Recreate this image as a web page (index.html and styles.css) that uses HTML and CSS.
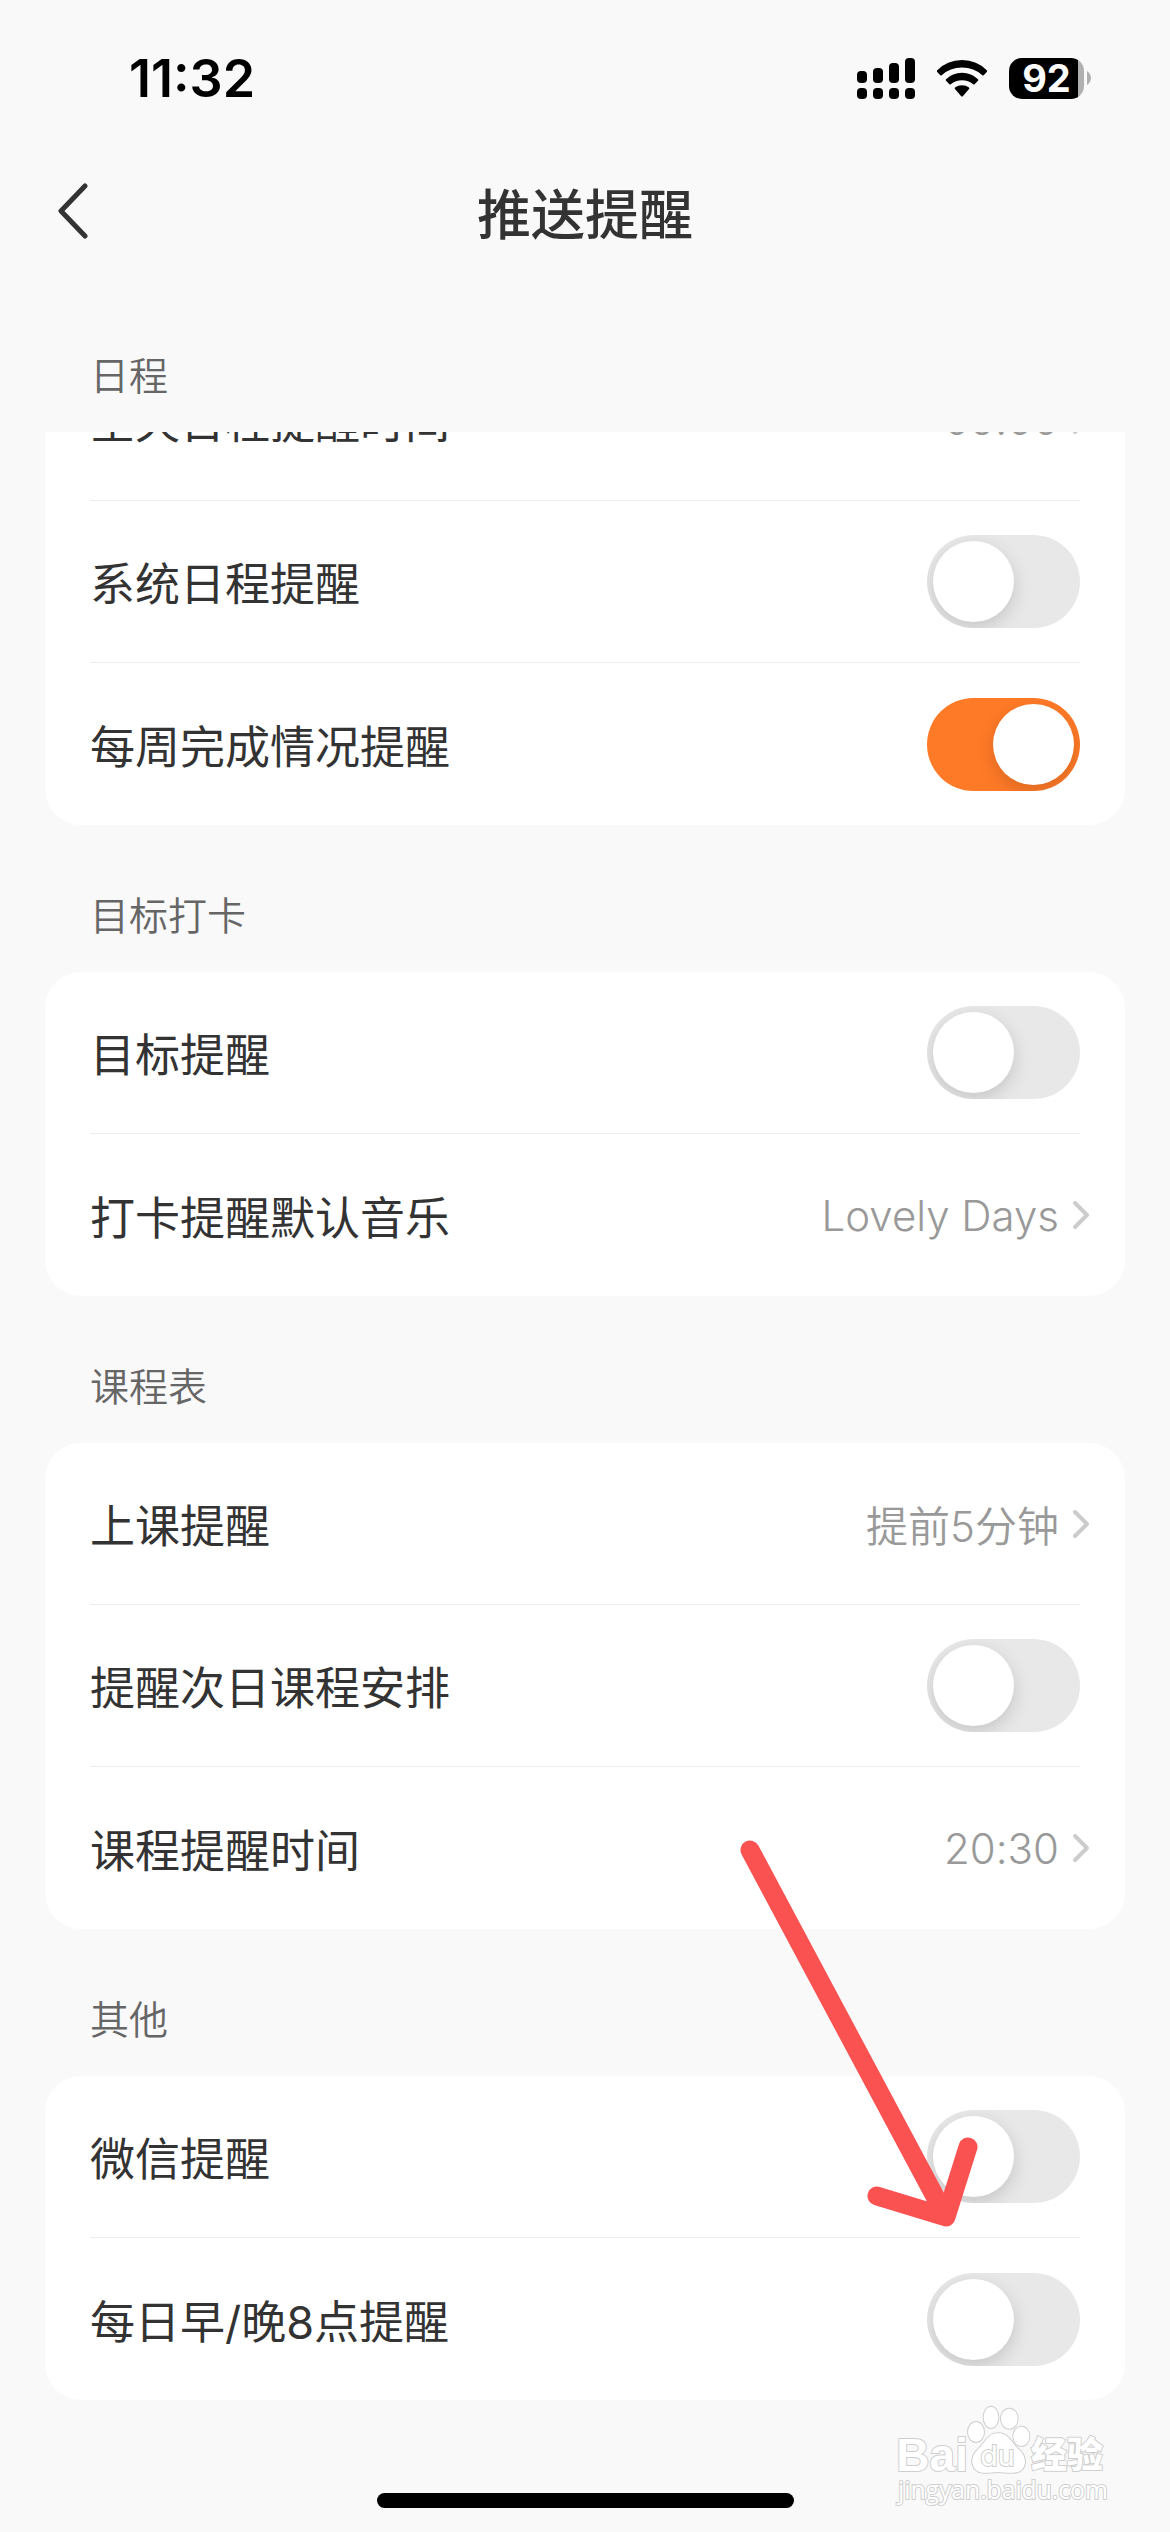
FILE: index.html
```
<!DOCTYPE html>
<html lang="zh-CN">
<head>
    <meta charset="UTF-8">
    <meta name="viewport" content="width=device-width, initial-scale=1.0">
    <title>推送提醒</title>
    <link rel="stylesheet" href="styles.css">
</head>
<body>
    <div class="page">
        <div class="status-bar">
            <span class="time">11:32</span>
            <div class="status-icons">
                <svg width="58" height="41" viewBox="0 0 58 41">
                    <rect x="0" y="13" width="10" height="12" rx="4"/>
                    <rect x="16" y="10" width="10" height="15" rx="4"/>
                    <rect x="32" y="5" width="10" height="20" rx="4"/>
                    <rect x="48" y="0" width="10" height="25" rx="4"/>
                    <rect x="0" y="30" width="10" height="11" rx="4"/>
                    <rect x="16" y="30" width="10" height="11" rx="4"/>
                    <rect x="32" y="30" width="10" height="11" rx="4"/>
                    <rect x="48" y="30" width="10" height="11" rx="4"/>
                </svg>
                <svg width="50" height="41" viewBox="0 0 50 41">
                    <path d="M0 12.500Q10 2 25 2T50 12.500Q50.500 13.200 50 13.800L46.700 17.200Q46 17.800 45.300 17.200Q37 9.500 25 9.500T4.700 17.200Q4 17.800 3.300 17.200L0 13.800Q-.5 13.200 0 12.500Z"/>
                    <path d="M9 21.300Q15.500 14.800 25 14.800T41 21.300Q41.700 22 41 22.700L37.600 26.200Q37 26.800 36.200 26.200Q31.500 22.200 25 22.200T13.800 26.200Q13 26.800 12.400 26.200L9 22.700Q8.300 22 9 21.300Z"/>
                    <path d="M18 29.500Q21 27.200 25 27.200T32 29.500Q32.800 30.300 32 31L25.800 38.200Q25 39 24.200 38.200L18 31Q17.200 30.300 18 29.500Z"/>
                </svg>
                <div class="battery">
                    <span class="battery-level">92</span>
                    <svg class="battery-cap" width="4" height="14" viewBox="0 0 4 14"><path d="M0 0Q4 3 4 7T0 14Z"/></svg>
                </div>
            </div>
        </div>

        <header class="nav">
            <button class="back" aria-label="返回">
                <svg width="32" height="56" viewBox="0 0 32 56"><path d="M28 3L4 28L28 53"/></svg>
            </button>
            <h1>推送提醒</h1>
        </header>

        <section>
            <h2>日程</h2>
            <div class="card card-scrolled">
                <a class="row" href="#">
                    <span>全天日程提醒时间</span>
                    <span class="value">09:00 <svg class="arrow" width="18" height="30" viewBox="0 0 18 30"><path d="M3 3L15 15L3 27"/></svg></span>
                </a>
                <label class="row">
                    <span>系统日程提醒</span>
                    <input type="checkbox" class="switch">
                </label>
                <label class="row">
                    <span>每周完成情况提醒</span>
                    <input type="checkbox" class="switch" checked>
                </label>
            </div>
        </section>

        <section>
            <h2>目标打卡</h2>
            <div class="card">
                <label class="row">
                    <span>目标提醒</span>
                    <input type="checkbox" class="switch">
                </label>
                <a class="row" href="#">
                    <span>打卡提醒默认音乐</span>
                    <span class="value">Lovely Days <svg class="arrow" width="18" height="30" viewBox="0 0 18 30"><path d="M3 3L15 15L3 27"/></svg></span>
                </a>
            </div>
        </section>

        <section>
            <h2>课程表</h2>
            <div class="card">
                <a class="row" href="#">
                    <span>上课提醒</span>
                    <span class="value">提前5分钟 <svg class="arrow" width="18" height="30" viewBox="0 0 18 30"><path d="M3 3L15 15L3 27"/></svg></span>
                </a>
                <label class="row">
                    <span>提醒次日课程安排</span>
                    <input type="checkbox" class="switch">
                </label>
                <a class="row" href="#">
                    <span>课程提醒时间</span>
                    <span class="value">20:30 <svg class="arrow" width="18" height="30" viewBox="0 0 18 30"><path d="M3 3L15 15L3 27"/></svg></span>
                </a>
            </div>
        </section>

        <section class="other">
            <h2>其他</h2>
            <div class="card">
                <label class="row">
                    <span>微信提醒</span>
                    <input type="checkbox" class="switch">
                </label>
                <label class="row">
                    <span>每日早/晚8点提醒</span>
                    <input type="checkbox" class="switch">
                </label>
            </div>
            <svg class="pointer" width="236" height="386" viewBox="0 0 236 386">
                <path d="M9 9L205 376M136 355L205 376L227 306"/>
            </svg>
        </section>

        <div class="home-bar"></div>

        <svg class="watermark" width="215" height="107" viewBox="100 490 645 321">
            <text class="wm-logo" x="110" y="693">Bai</text>
            <g class="wm-paw">
                <ellipse cx="349" cy="577" rx="24" ry="30"/>
                <ellipse cx="394" cy="533" rx="22" ry="32"/>
                <ellipse cx="449" cy="537" rx="25" ry="30"/>
                <ellipse cx="485" cy="590" rx="24" ry="29"/>
                <path d="M415 581C450 581 455 612 478 630C498 646 502 676 486 690C468 706 440 697 415 697C390 697 365 706 348 690C332 674 336 646 354 630C378 610 382 581 415 581Z"/>
            </g>
            <text class="wm-du" x="362" y="680">du</text>
            <text class="wm-cn" x="514" y="686">经验</text>
            <text class="wm-url" x="115" y="778">jingyan.baidu.com</text>
        </svg>
    </div>
</body>
</html>
```
FILE: styles.css
```
* {
    box-sizing: border-box;
}
body {
    margin: 0;
    background-color: #f9f9f9;
    color: #333;
    font-family: Inter, "Noto Sans CJK SC", sans-serif;
}
.page {
    position: relative;
    display: flex;
    flex-direction: column;
    min-height: 100vh;
}

/* status bar */
.status-bar {
    display: flex;
    justify-content: space-between;
    align-items: center;
    height: 156px;
    padding: 0 79px 0 129px;
    color: #000;
}
.time {
    font-size: 52px;
    font-weight: 600;
}
.status-icons {
    display: flex;
    align-items: center;
    gap: 22px;
}
.battery {
    display: flex;
    align-items: center;
    gap: 3px;
}
.battery-level {
    width: 75px;
    height: 41px;
    border-radius: 13px;
    background: linear-gradient(to right, #000 92%, #b0b0b0 92%);
    color: #fff;
    font-size: 38px;
    font-weight: 700;
    line-height: 41px;
    text-align: center;
}
.battery-cap {
    fill: #b0b0b0;
}

/* title */
.nav {
    position: relative;
    display: flex;
    justify-content: center;
    align-items: center;
    height: 110px;
    margin-bottom: 19px;
}
.nav h1 {
    margin: 0;
    font-size: 54px;
    font-weight: 500;
}
.back {
    position: absolute;
    left: 57px;
    display: flex;
    padding: 0;
    border: none;
    background: none;
    cursor: pointer;
}
.back path {
    fill: none;
    stroke: #333;
    stroke-width: 5;
    stroke-linecap: round;
    stroke-linejoin: round;
}

/* groups */
section {
    padding: 0 45px;
}
h2 {
    margin: 0;
    padding: 63px 45px 28px;
    color: #666;
    font-size: 39px;
    font-weight: 350;
    line-height: 56px;
}
.card {
    padding: 0 45px;
    border-radius: 36px;
    background-color: #fff;
    overflow: hidden;
}
.card-scrolled {
    border-top-left-radius: 0;
    border-top-right-radius: 0;
}
/* list is scrolled, the first row goes under the title */
.card-scrolled .row:first-child {
    margin-top: -93px;
}
.row {
    display: flex;
    justify-content: space-between;
    align-items: center;
    height: 162px;
    border-bottom: 1px solid #ededed;
    color: #333;
    font-size: 45px;
    text-decoration: none;
}
.row:last-child {
    border-bottom: none;
}
.value {
    display: flex;
    align-items: center;
    gap: 13px;
    margin-right: -10px;
    color: #999;
    font-size: 42px;
    font-weight: 350;
    font-variant-ligatures: no-contextual;
}
.arrow {
    fill: none;
    stroke: #ccc;
    stroke-width: 4;
    stroke-linecap: round;
    stroke-linejoin: round;
}
.switch {
    appearance: none;
    width: 153px;
    height: 93px;
    margin: 0;
    padding: 6px;
    border-radius: 47px;
    background-color: #e8e8e8;
    overflow: hidden;
    cursor: pointer;
}
.switch::before {
    content: "";
    display: block;
    width: 81px;
    height: 81px;
    border-radius: 50%;
    background-color: #fff;
    box-shadow: 0 6px 18px rgba(0, 0, 0, 0.15);
}
.switch:checked {
    background-color: #ff7a27;
}
.switch:checked::before {
    margin-left: auto;
}

/* red arrow over the last group */
.other {
    position: relative;
}
.pointer {
    position: absolute;
    top: -88px;
    right: 193px;
    fill: none;
    stroke: #fa5151;
    stroke-width: 19;
    stroke-linecap: round;
    stroke-linejoin: round;
    overflow: visible;
    pointer-events: none;
}

.home-bar {
    width: 417px;
    height: 15px;
    margin: auto auto 24px;
    border-radius: 8px;
    background-color: #000;
}

/* watermark */
.watermark {
    position: absolute;
    right: 62px;
    bottom: 22px;
    fill: #fff;
    stroke: #cfcfcf;
    stroke-width: 6;
    paint-order: stroke;
}
.wm-logo {
    font-family: "Liberation Sans", sans-serif;
    font-size: 138px;
    font-weight: 700;
}
.wm-du {
    font-size: 86px;
    font-weight: 400;
}
.wm-cn {
    font-family: "Noto Sans CJK SC", sans-serif;
    font-size: 108px;
    font-weight: 900;
}
.wm-url {
    font-family: "Open Sans", sans-serif;
    font-size: 74px;
}
```
